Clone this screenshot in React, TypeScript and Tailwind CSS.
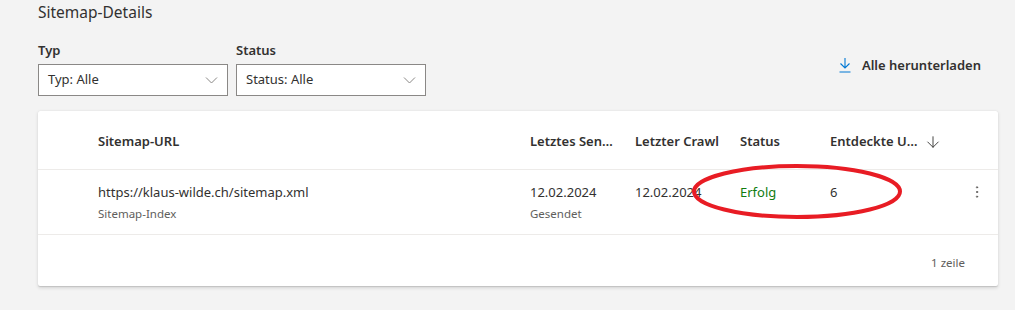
import { ArrowDown, MoreVertical } from 'lucide-react';

const font = { fontFamily: '"Noto Sans", "Open Sans", sans-serif' };

function Select({ label, value }: { label: string; value: string }) {
  return (
    <div className="flex flex-col">
      <span className="mb-[5px] text-[13px] font-semibold leading-[18px] text-[#323130]">{label}</span>
      <div className="flex h-[32px] w-[190px] items-center justify-between border border-[#8a8886] bg-white pl-[9px] pr-[9px]">
        <span className="text-[13px] text-[#323130]">{value}</span>
        <svg width="13" height="8" viewBox="0 0 13 8" fill="none" stroke="#8a8886" strokeWidth="1">
          <path d="M1 1.5l5.5 5.5 5.5-5.5" />
        </svg>
      </div>
    </div>
  );
}

export default function App() {
  return (
    <div className="relative h-[310px] w-[1015px] overflow-hidden bg-[#f3f3f3] text-[#323130]" style={font}>
      <div className="pl-[38px] pr-[17px] pt-[1px]">
        <h2 className="text-[15.5px] leading-[22px] text-[#323130]">Sitemap-Details</h2>

        <div className="mt-[18px] flex items-end">
          <div className="flex gap-[8px]">
            <Select label="Typ" value="Typ: Alle" />
            <Select label="Status" value="Status: Alle" />
          </div>
          <button className="ml-auto mb-[21px] mr-[17px] flex items-center gap-[10px] text-[13px] font-semibold text-[#323130]">
            <svg width="14" height="16" viewBox="0 0 14 16" fill="none" stroke="#0078d4" strokeWidth="1.1">
              <path d="M7 1v10M2.5 6.5 7 11l4.5-4.5M1.5 15h11" />
            </svg>
            Alle herunterladen
          </button>
        </div>

        <div className="mt-[15px] w-[960px] rounded-[2px] bg-white shadow-[0_1.6px_3.6px_rgba(0,0,0,0.13),0_0.3px_0.9px_rgba(0,0,0,0.11)]">
          <div className="grid h-[59px] grid-cols-[60px_432px_105px_105px_90px_1fr] items-center border-b border-[#edebe9] pt-[4px] text-[13px] font-semibold">
            <div />
            <div>Sitemap-URL</div>
            <div className="truncate pr-[20px]">Letztes Sendedatum</div>
            <div className="whitespace-nowrap">Letzter Crawl</div>
            <div>Status</div>
            <div className="flex items-center">
              <span className="w-[88px] truncate">Entdeckte URLs</span>
              <ArrowDown className="ml-[6px] h-[18px] w-[18px] text-[#323130]" strokeWidth={1.2} />
            </div>
          </div>

          <div className="grid h-[65px] grid-cols-[60px_432px_105px_105px_90px_1fr] border-b border-[#edebe9] pt-[12px] text-[13px]">
            <div />
            <div className="flex flex-col">
              <span className="leading-[20px]">https://klaus-wilde.ch/sitemap.xml</span>
              <span className="mt-[4px] text-[11.5px] leading-[16px] text-[#605e5c]">Sitemap-Index</span>
            </div>
            <div className="flex flex-col">
              <span className="leading-[20px]">12.02.2024</span>
              <span className="mt-[4px] text-[11.5px] leading-[16px] text-[#605e5c]">Gesendet</span>
            </div>
            <div className="leading-[20px]">12.02.2024</div>
            <div className="leading-[20px] text-[#107c10]">Erfolg</div>
            <div className="flex items-start justify-between pr-[13px]">
              <span className="leading-[20px]">6</span>
              <MoreVertical className="mt-[2px] h-[16px] w-[16px] text-[#605e5c]" strokeWidth={1.5} />
            </div>
          </div>

          <div className="flex h-[51px] items-center justify-end pr-[33px] pt-[4px] text-[11.5px] text-[#605e5c]">1 zeile</div>
        </div>
      </div>

      <svg className="pointer-events-none absolute left-0 top-0" width="1015" height="310">
        <ellipse cx="797" cy="191.5" rx="103" ry="25.5" fill="none" stroke="#e81c24" strokeWidth="4" />
      </svg>
    </div>
  );
}
